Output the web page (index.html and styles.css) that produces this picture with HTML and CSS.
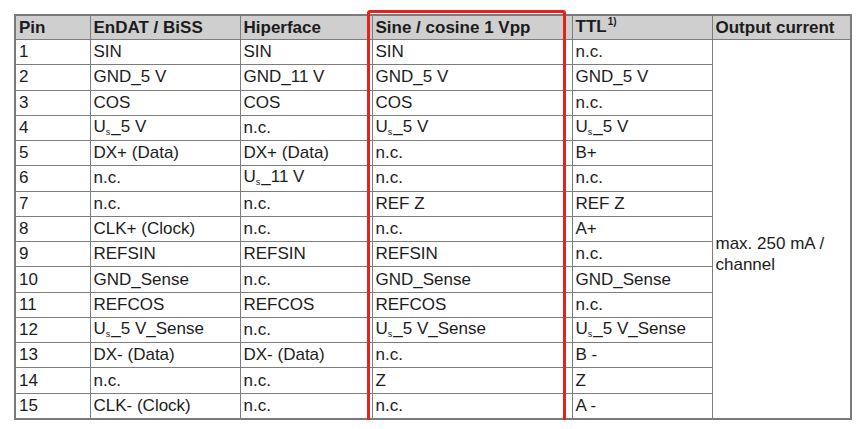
FILE: index.html
```html
<!DOCTYPE html>
<html>
<head>
<meta charset="utf-8">
<link rel="stylesheet" href="styles.css">
</head>
<body>
<div class="page">
  <div class="wrap">
    <table class="pins">
      <colgroup>
        <col class="c-pin"><col class="c-endat"><col class="c-hiper"><col class="c-sine"><col class="c-ttl"><col class="c-out">
      </colgroup>
      <thead>
        <tr>
          <th>Pin</th><th>EnDAT / BiSS</th><th>Hiperface</th><th>Sine / cosine 1 Vpp</th><th>TTL<sup class="fn">1)</sup></th><th>Output current</th>
        </tr>
      </thead>
      <tbody>
        <tr><td>1</td><td>SIN</td><td>SIN</td><td>SIN</td><td>n.c.</td><td class="out" rowspan="15"><div class="outtext">max. 250 mA /<br>channel</div></td></tr>
        <tr><td>2</td><td>GND_5 V</td><td>GND_11 V</td><td>GND_5 V</td><td>GND_5 V</td></tr>
        <tr><td>3</td><td>COS</td><td>COS</td><td>COS</td><td>n.c.</td></tr>
        <tr><td>4</td><td>U<sub class="s">s</sub>_5 V</td><td>n.c.</td><td>U<sub class="s">s</sub>_5 V</td><td>U<sub class="s">s</sub>_5 V</td></tr>
        <tr><td>5</td><td>DX+ (Data)</td><td>DX+ (Data)</td><td>n.c.</td><td>B+</td></tr>
        <tr><td>6</td><td>n.c.</td><td>U<sub class="s">s</sub>_11 V</td><td>n.c.</td><td>n.c.</td></tr>
        <tr><td>7</td><td>n.c.</td><td>n.c.</td><td>REF Z</td><td>REF Z</td></tr>
        <tr><td>8</td><td>CLK+ (Clock)</td><td>n.c.</td><td>n.c.</td><td>A+</td></tr>
        <tr><td>9</td><td>REFSIN</td><td>REFSIN</td><td>REFSIN</td><td>n.c.</td></tr>
        <tr><td>10</td><td>GND_Sense</td><td>n.c.</td><td>GND_Sense</td><td>GND_Sense</td></tr>
        <tr><td>11</td><td>REFCOS</td><td>REFCOS</td><td>REFCOS</td><td>n.c.</td></tr>
        <tr><td>12</td><td>U<sub class="s">s</sub>_5 V_Sense</td><td>n.c.</td><td>U<sub class="s">s</sub>_5 V_Sense</td><td>U<sub class="s">s</sub>_5 V_Sense</td></tr>
        <tr><td>13</td><td>DX- (Data)</td><td>DX- (Data)</td><td>n.c.</td><td>B -</td></tr>
        <tr><td>14</td><td>n.c.</td><td>n.c.</td><td>Z</td><td>Z</td></tr>
        <tr><td>15</td><td>CLK- (Clock)</td><td>n.c.</td><td>n.c.</td><td>A -</td></tr>
      </tbody>
    </table>
    <div class="highlight"></div>
  </div>
</div>
</body>
</html>
```
FILE: styles.css
```css
html, body {
  margin: 0;
  padding: 0;
  background: #ffffff;
}
.page {
  padding: 14px 0 0 14px;
}
.wrap {
  position: relative;
  width: 836px;
}
.pins {
  border-collapse: collapse;
  table-layout: fixed;
  width: 836px;
  font-family: "Liberation Sans", Arial, sans-serif;
  font-size: 17px;
  color: #1c1c1c;
  border: 2px solid #7a7a7a;
}
.c-pin { width: 75px; }
.c-endat { width: 150px; }
.c-hiper { width: 132px; }
.c-sine { width: 200px; }
.c-ttl { width: 140px; }
.c-out { width: 139px; }
.pins th, .pins td {
  border: 1px solid #7d7d7d;
  padding: 0 0 0 3px;
  text-align: left;
  vertical-align: middle;
  white-space: nowrap;
  line-height: 20px;
}
.pins th {
  background: #cfcfcf;
  font-weight: bold;
  height: 23px;
}
.pins td {
  height: 24.27px;
}
.pins td.out {
  vertical-align: top;
  white-space: normal;
}
.outtext {
  padding-top: 193px;
  line-height: 21px;
}
.fn {
  font-size: 10px;
  vertical-align: 0;
  position: relative;
  top: -7px;
  margin-left: 1px;
}
.s {
  font-size: 9px;
  vertical-align: 0;
  position: relative;
  top: 3px;
  margin: 0 1px 0 0;
}
.highlight {
  position: absolute;
  left: 353px;
  top: -4px;
  width: 193px;
  height: 410px;
  border: 3px solid #e3231c;
  border-radius: 3px;
}
```
